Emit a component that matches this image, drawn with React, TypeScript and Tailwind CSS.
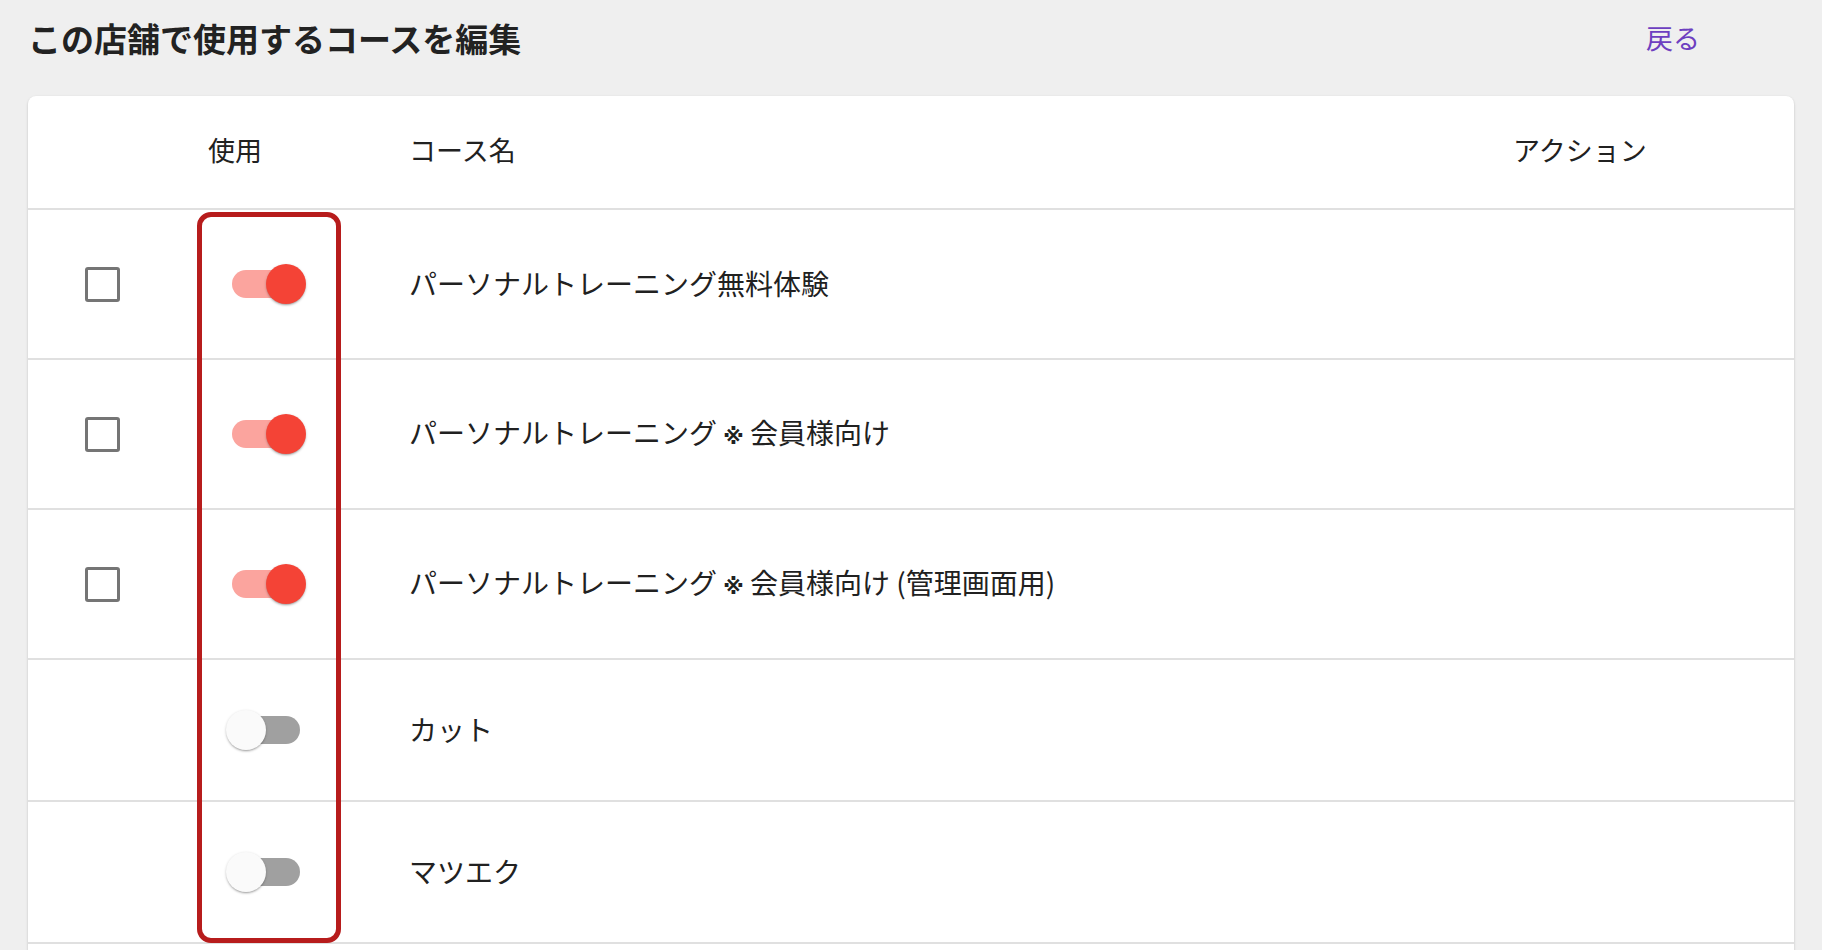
const courses = [
  { id: 1, name: 'パーソナルトレーニング無料体験', enabled: true, selectable: true },
  { id: 2, name: 'パーソナルトレーニング ※ 会員様向け', enabled: true, selectable: true },
  { id: 3, name: 'パーソナルトレーニング ※ 会員様向け (管理画面用)', enabled: true, selectable: true },
  { id: 4, name: 'カット', enabled: false, selectable: false },
  { id: 5, name: 'マツエク', enabled: false, selectable: false },
];

const Toggle = ({ on }: { on: boolean }) => (
  <div className="relative w-[116px] h-[76px] flex items-center">
    <div
      className={`ml-[24px] w-[68px] h-[28px] rounded-full ${on ? 'bg-[#fba49e]' : 'bg-[#a0a0a0]'}`}
    />
    <div
      className={`absolute top-[18px] w-[40px] h-[40px] rounded-full shadow-[0_2px_2px_-1px_rgba(0,0,0,0.25),0_1px_3px_0_rgba(0,0,0,0.2)] ${
        on ? 'left-[58px] bg-[#f44336]' : 'left-[18px] bg-[#fafafa]'
      }`}
    />
  </div>
);

// ※ は小さめに表示
const CourseName = ({ name }: { name: string }) => {
  const parts = name.split('※');
  return (
    <>
      {parts.map((p, i) => (
        <span key={i}>
          {i > 0 && <span className="text-[21px] font-['DejaVu_Sans',sans-serif] font-bold">※</span>}
          {p}
        </span>
      ))}
    </>
  );
};

export default function App() {
  return (
    <div className="min-h-screen bg-[#efefef] px-[28px] pt-[14px] font-['Noto_Sans_CJK_JP','Noto_Sans',sans-serif] text-[#212121]">
      {/* ヘッダー */}
      <div className="flex items-center justify-between h-[48px] pr-[94px]">
        <h1 className="text-[33px] font-bold leading-[48px] text-[#222]">この店舗で使用するコースを編集</h1>
        <a href="#" className="text-[27px] text-[#6d3fc0]">
          戻る
        </a>
      </div>

      {/* テーブル */}
      <div className="relative mt-[34px] bg-white rounded-[8px] shadow-[0_1px_3px_rgba(0,0,0,0.12),0_1px_2px_rgba(0,0,0,0.08)] pb-[40px]">
        <div className="grid grid-cols-[180px_201px_1104px_1fr] items-center h-[114px] pb-[4px] border-b-2 border-[#e0e0e0] text-[27px]">
          <div />
          <div>使用</div>
          <div>コース名</div>
          <div>アクション</div>
        </div>

        {courses.map((c) => (
          <div
            key={c.id}
            className={`grid grid-cols-[180px_201px_1104px_1fr] items-center border-b-2 border-[#e0e0e0] text-[28px] ${
              c.selectable ? 'h-[150px]' : 'h-[142px]'
            }`}
          >
            <div className="pl-[57px]">
              {c.selectable && <div className="w-[35px] h-[35px] border-[3px] border-[#757575] rounded-[3px]" />}
            </div>
            <div>
              <Toggle on={c.enabled} />
            </div>
            <div className="whitespace-nowrap pb-[3px]">
              <CourseName name={c.name} />
            </div>
            <div />
          </div>
        ))}

        {/* 注目枠 */}
        <div className="absolute left-[169px] top-[116px] w-[144px] h-[731px] border-[5px] border-[#b71c1c] rounded-[14px] pointer-events-none" />
      </div>
    </div>
  );
}
